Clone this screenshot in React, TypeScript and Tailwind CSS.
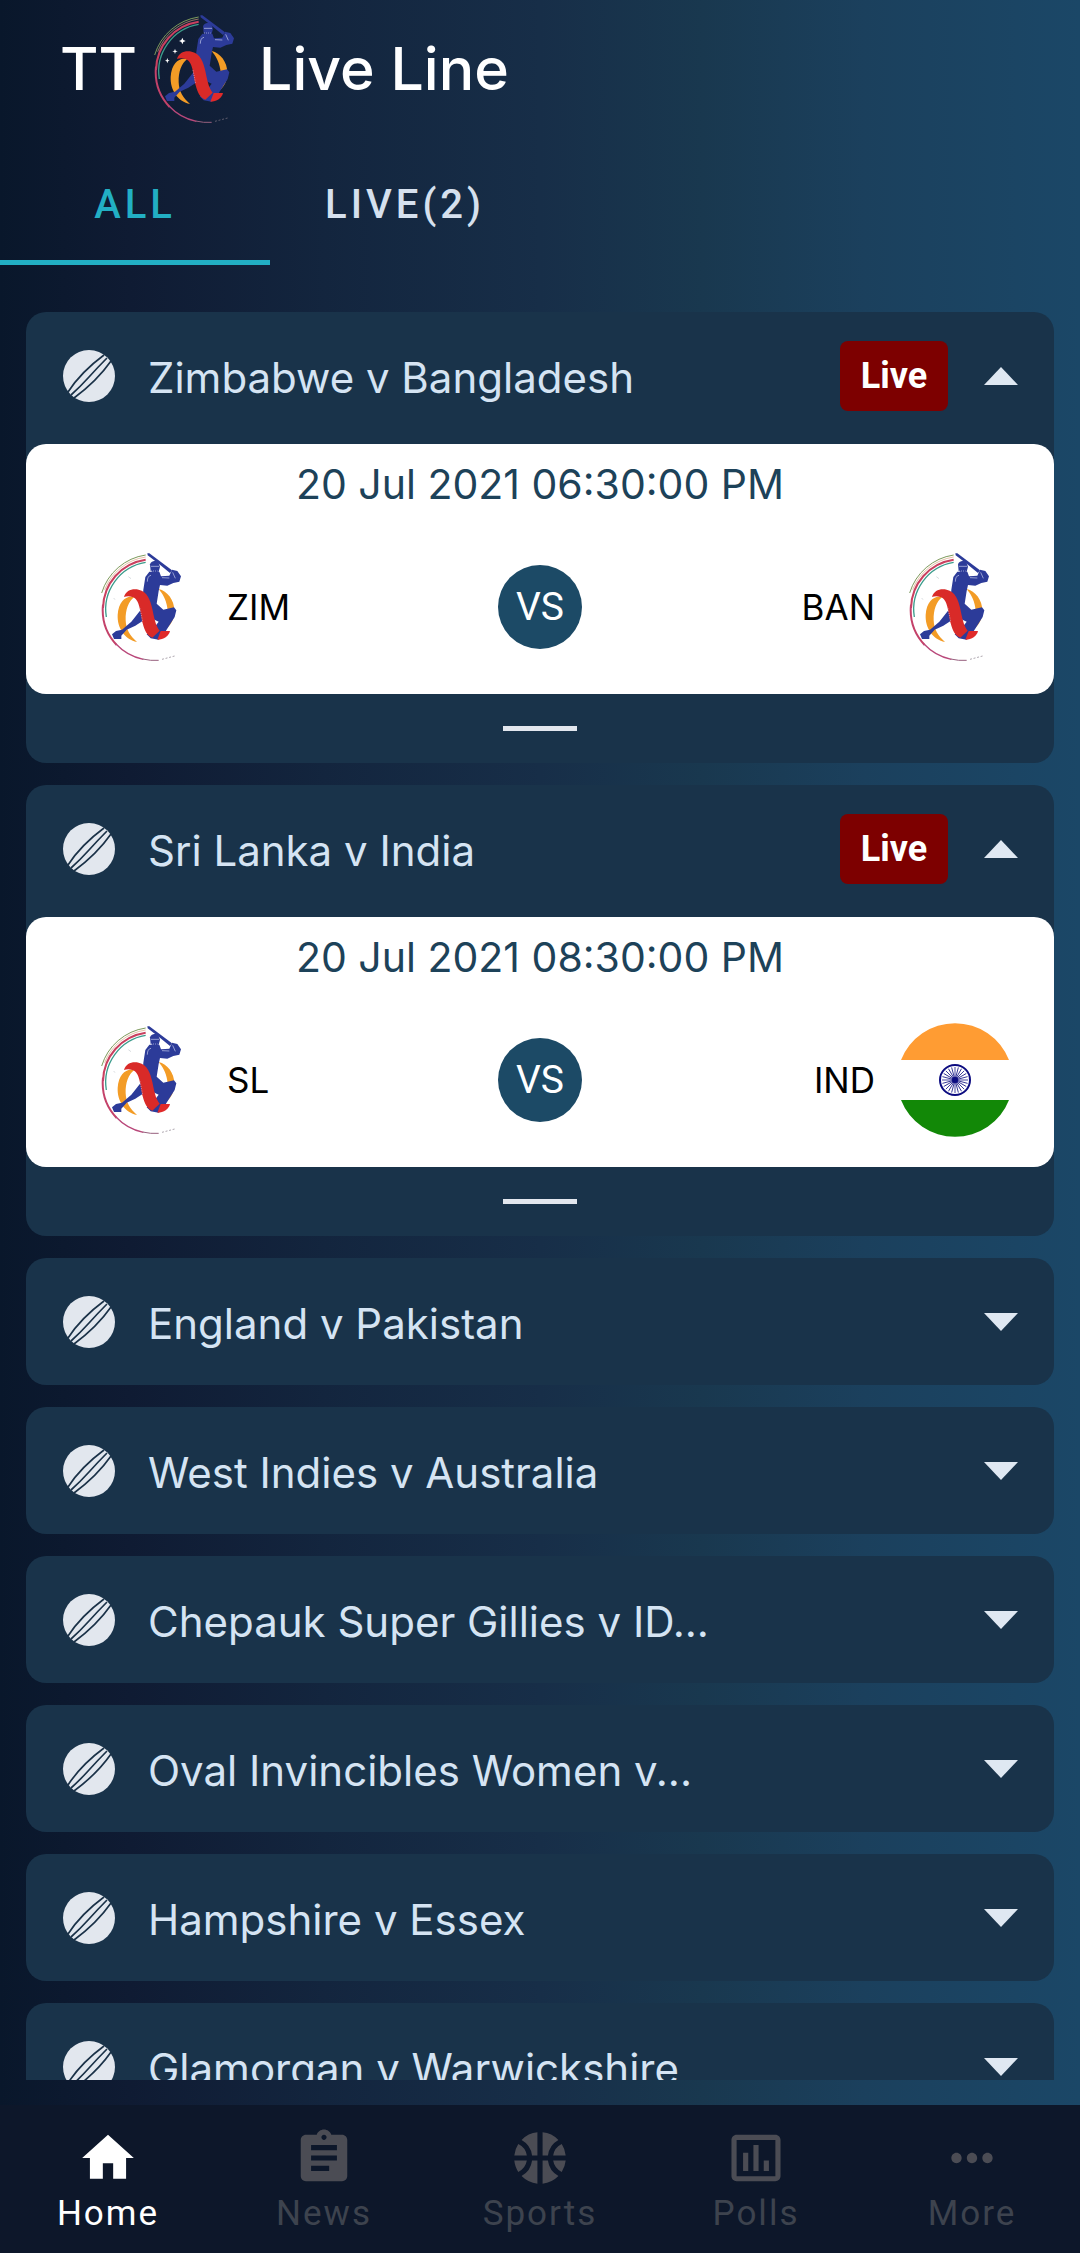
import { useState } from "react";
import {
  MdAssignment,
  MdHome,
  MdInsertChartOutlined,
  MdMoreHoriz,
  MdSportsBasketball,
} from "react-icons/md";

type Team = { code: string; flag: "logo" | "india" };
type Match = { title: string; live?: boolean; date?: string; teams?: [Team, Team] };

const matches: Match[] = [
  {
    title: "Zimbabwe v Bangladesh",
    live: true,
    date: "20 Jul 2021 06:30:00 PM",
    teams: [
      { code: "ZIM", flag: "logo" },
      { code: "BAN", flag: "logo" },
    ],
  },
  {
    title: "Sri Lanka v India",
    live: true,
    date: "20 Jul 2021 08:30:00 PM",
    teams: [
      { code: "SL", flag: "logo" },
      { code: "IND", flag: "india" },
    ],
  },
  { title: "England v Pakistan" },
  { title: "West Indies v Australia" },
  { title: "Chepauk Super Gillies v ID..." },
  { title: "Oval Invincibles Women v..." },
  { title: "Hampshire v Essex" },
  { title: "Glamorgan v Warwickshire" },
];

const navItems = [
  { label: "Home", Icon: MdHome },
  { label: "News", Icon: MdAssignment },
  { label: "Sports", Icon: MdSportsBasketball },
  { label: "Polls", Icon: MdInsertChartOutlined },
  { label: "More", Icon: MdMoreHoriz },
];

function BatsmanLogo({ className, stars = false }: { className: string; stars?: boolean }) {
  return (
    <svg viewBox="60 68 246 328" className={className} aria-hidden="true">
      <g fill="none">
        <path d="M197 76A163 163 0 0 0 65 190" stroke="#7d9a5c" strokeWidth="3" />
        <path d="M197 82A157 157 0 0 0 74 180" stroke="#d9a07a" strokeWidth="2" />
        <path d="M197 90A149 149 0 0 0 69 235" stroke="#c9405f" strokeWidth="6" />
        <path d="M69 225A154 154 0 0 0 110 346" stroke="#c4426a" strokeWidth="6" />
        <path d="M108 343A154 154 0 0 0 190 389" stroke="#b9487a" strokeWidth="4" />
        <path d="M188 388A154 154 0 0 0 236 392" stroke="#97607e" strokeWidth="3" />
        <path d="M246 389L284 379" stroke="#857a86" strokeWidth="2" strokeDasharray="6 5" />
        <path d="M197 98A143 143 0 0 0 79 262" stroke="#3c9c8c" strokeWidth="4" />
      </g>
      <path
        d="M162 203C140 196 116 214 113 255C111 296 136 330 171 337C150 318 138 300 137 272C136 240 146 215 162 203Z"
        fill="#f39c26"
      />
      <path
        d="M236 178C262 184 283 211 283 243C283 275 266 298 240 307L244 294C260 276 265 258 262 234C258 208 248 193 236 178Z"
        fill="#f39c26"
      />
      <g fill="#2c3b99">
        <path d="M202 71L208 71L276 122L270 130L236 102L203 77Z" />
        <path d="M210 104C212 94 226 90 235 98L240 111L236 126L224 129L212 124Z" />
        <path d="M208 126L238 126L243 140L268 138L276 120L292 124L303 140L298 156L280 160L262 168L240 166L236 184L230 222L250 240L282 233L289 242L284 262L246 322L236 330L212 326L200 314L224 292L236 276L206 262L166 288L140 300L124 318L124 328L102 328L96 314L108 304L126 300L154 276L186 236L190 180L196 142Z" />
      </g>
      <path
        d="M132 202C138 182 156 176 176 180C202 186 211 210 217 238C223 266 227 289 239 303L217 324C202 319 194 304 188 281C180 248 180 208 157 202C147 199 139 200 132 202Z"
        fill="#d92a28"
      />
      <path d="M242 304L270 304C266 320 252 330 232 330Z" fill="#e02a2a" />
      <g fill="none" stroke="#c9cfee" strokeWidth="2">
        <path d="M213 110L237 110" />
        <path d="M202 156C202 144 206 138 213 137M246 144L268 145M278 128L286 146" />
        <path d="M180 236L188 276" strokeDasharray="3 4" />
        <path d="M213 124L233 124" strokeDasharray="3 3" />
      </g>
      {stars ? (
        <g fill="#ffffff">
          <path d="M148 138l3 7 7 3-7 3-3 7-3-7-7-3 7-3z" />
          <path d="M126 171l2 6 6 2-6 2-2 6-2-6-6-2 6-2z" />
          <path d="M103 199l2 6 5 2-5 2-2 6-2-6-5-2 5-2z" />
        </g>
      ) : (
        <path d="M145 141l8 6M101 205l4 5" stroke="#c5cbd0" strokeWidth="2" />
      )}
    </svg>
  );
}

function IndiaFlag() {
  const spokes = Array.from({ length: 24 }, (_, i) => i * 15);
  return (
    <svg viewBox="0 0 108 116" className="h-[116px] w-[108px] shrink-0" aria-hidden="true">
      <path d="M0 38A58 58 0 0 1 108 38Z" fill="#ff9c33" />
      <path d="M0 78A58 58 0 0 0 108 78Z" fill="#128807" />
      <circle cx="54" cy="58" r="15" fill="none" stroke="#0b0b80" strokeWidth="2" />
      {spokes.map((a) => (
        <path key={a} d="M54 58V45" stroke="#1a1a88" strokeWidth="0.8" transform={`rotate(${a} 54 58)`} />
      ))}
      <circle cx="54" cy="58" r="3" fill="#0b0b80" />
    </svg>
  );
}

function BallIcon() {
  return (
    <svg viewBox="0 0 52 52" className="h-[52px] w-[52px] shrink-0" aria-hidden="true">
      <circle cx="26" cy="26" r="26" fill="#e2e7ee" />
      <g fill="none" stroke="#1b3248" strokeWidth="1.7">
        <path d="M5 42Q18 22 41 5" />
        <path d="M8 45Q17 37 26 27T44 8" />
        <path d="M11 48Q34 31 48 11" />
      </g>
    </svg>
  );
}

function TeamFlag({ flag }: { flag: Team["flag"] }) {
  return (
    <span className="flex w-[120px] shrink-0 items-center justify-center">
      {flag === "india" ? <IndiaFlag /> : <BatsmanLogo className="mr-3 h-[110px] w-[82px]" />}
    </span>
  );
}

function MatchCard({ match }: { match: Match }) {
  const [open, setOpen] = useState(Boolean(match.teams));
  const expanded = open && match.teams;
  return (
    <article className="shrink-0 overflow-hidden rounded-[20px] bg-[#19334a]">
      <button
        type="button"
        aria-expanded={Boolean(expanded)}
        onClick={() => setOpen(!open)}
        className={`flex w-full items-center pr-9 pl-[37px] text-left ${expanded ? "h-[132px] pb-1" : "h-[127px]"}`}
      >
        <BallIcon />
        <span className="ml-[33px] min-w-0 flex-1 truncate pt-1 text-[42px] leading-[56px] text-[#d5e4f3]">
          {match.title}
        </span>
        {match.live && (
          <span className="mr-9 flex h-[70px] w-[108px] items-center justify-center rounded-lg bg-[#7d0000] font-[Roboto] text-[36px] font-bold text-white">
            Live
          </span>
        )}
        <svg viewBox="0 0 34 18" className="h-[18px] w-[34px] shrink-0" aria-hidden="true">
          <path d={expanded ? "M0 18L17 0L34 18Z" : "M0 0L17 18L34 0Z"} fill="#dfe8f2" />
        </svg>
      </button>
      {expanded && match.teams && (
        <>
          <div className="h-[250px] rounded-[20px] bg-white pt-3">
            <p className="text-center text-[41px] leading-[56px] text-[#1d4259]">{match.date}</p>
            <div className="mt-9 grid h-[118px] grid-cols-[1fr_84px_1fr] items-center px-[55px] text-[35px] text-black">
              <div className="ml-1.5 flex items-center gap-5">
                <TeamFlag flag={match.teams[0].flag} />
                {match.teams[0].code}
              </div>
              <span className="flex h-[84px] w-[84px] items-center justify-center rounded-full bg-[#1c4a66] font-[Roboto] text-[39px] text-white">
                VS
              </span>
              <div className="-mr-4 flex items-center justify-end gap-5">
                {match.teams[1].code}
                <TeamFlag flag={match.teams[1].flag} />
              </div>
            </div>
          </div>
          <div className="flex h-[69px] justify-center pt-8">
            <span className="h-[5px] w-[74px] bg-[#e2e7ee]" />
          </div>
        </>
      )}
    </article>
  );
}

export default function App() {
  const [tab, setTab] = useState("ALL");
  const [page, setPage] = useState("Home");
  return (
    <div className="flex h-screen flex-col bg-[linear-gradient(90deg,#09172b_0%,#0f1b33_12%,#13253e_30%,#172e48_50%,#19384f_65%,#1b405d_80%,#1b4767_100%)] font-[Inter,sans-serif]">
      <header className="flex h-[142px] shrink-0 items-center px-[60px] pb-1 text-[59px] text-white">
        <h1 className="flex items-center font-medium">
          TT
          <BatsmanLogo className="mr-6 ml-4 h-[110px] w-[82px]" stars />
          Live Line
        </h1>
      </header>
      <nav className="flex shrink-0" aria-label="Match filter">
        {["ALL", "LIVE(2)"].map((name) => (
          <button
            key={name}
            type="button"
            onClick={() => setTab(name)}
            className={`h-[123px] w-1/4 border-b-[5px] pt-2 font-[Roboto] text-[40px] font-medium tracking-[4px] ${
              tab === name ? "border-[#22afc4] text-[#22afc4]" : "border-transparent text-[#d5e0ee]"
            }`}
          >
            {name}
          </button>
        ))}
      </nav>
      <main className="mx-[26px] mt-[47px] mb-[25px] flex min-h-0 flex-1 flex-col gap-[22px] overflow-y-auto [scrollbar-width:none]">
        {matches.map((m) => (
          <MatchCard key={m.title} match={m} />
        ))}
      </main>
      <nav className="flex h-[148px] shrink-0 bg-[#0d172a]" aria-label="Main">
        {navItems.map(({ label, Icon }) => (
          <button
            key={label}
            type="button"
            onClick={() => setPage(label)}
            className={`flex flex-1 flex-col items-center gap-px pt-[22px] font-[Roboto] text-[35px] leading-[48px] tracking-[2px] ${
              page === label ? "text-white" : "text-[#3d434e]"
            }`}
          >
            <Icon className={page === label ? "size-[62px]" : "size-[62px] text-[#4b4c54]"} />
            {label}
          </button>
        ))}
      </nav>
    </div>
  );
}
